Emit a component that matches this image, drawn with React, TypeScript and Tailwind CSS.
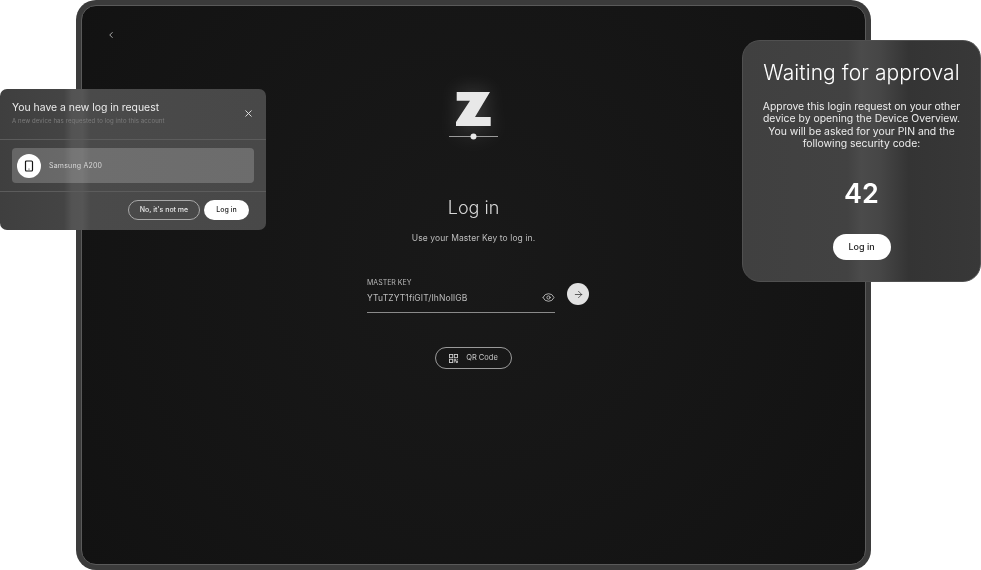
import { ArrowRight, ChevronLeft, Eye, Smartphone, X } from 'lucide-react';

const QrIcon = () => (
  <svg width="9" height="9" viewBox="0 0 10 10" fill="none" stroke="#cfcfcf" strokeWidth="1">
    <rect x="0.5" y="0.5" width="3.6" height="3.6" />
    <rect x="5.9" y="0.5" width="3.6" height="3.6" />
    <rect x="0.5" y="5.9" width="3.6" height="3.6" />
    <path d="M5.9 5.9h1.6v1.6H5.9zM8 8h1.500v1.500H8zM5.900 9.500V8M9.500 5.900v1" />
  </svg>
);

const LoginRequestCard = () => (
  <div className="absolute left-0 top-[89px] z-10 h-[141px] w-[266px] overflow-hidden rounded-[7px] bg-[linear-gradient(90deg,#3f3f3f_0%,#444444_24%,#535353_27%,#555555_31%,#4a4a4a_34%,#484848_100%)] [will-change:opacity]">
    <div className="flex h-[51px] items-start justify-between border-b border-[#5c5c5c] pl-3 pr-3 pt-[12px]">
      <div>
        <h2 className="text-[10.4px] leading-[14px] text-[#ececec]">You have a new log in request</h2>
        <p className="mt-[1px] text-[6px] leading-[9px] tracking-[0.12px] text-[#7c7c7c]">
          A new device has requested to log into this account
        </p>
      </div>
      <X className="mt-[7px] h-[11px] w-[11px] text-[#e8e8e8]" strokeWidth={2} />
    </div>
    <div className="flex h-[52px] items-center border-b border-[#5c5c5c] px-3">
      <div className="flex h-[35px] w-full items-center gap-2 rounded-[4px] bg-white/20 pl-[5px]">
        <div className="flex h-6 w-6 items-center justify-center rounded-full bg-white">
          <Smartphone className="h-3 w-3 text-[#151515]" strokeWidth={2.4} />
        </div>
        <span className="pt-[1px] text-[7px] tracking-[0.2px] text-[#d8d8d8]">Samsung A200</span>
      </div>
    </div>
    <div className="flex justify-end gap-1 pr-[17px] pt-[8px]">
      <button className="h-5 w-[72px] rounded-full border border-[#a8a8a8] text-[7px] font-medium text-[#e6e6e6]">
        No, it's not me
      </button>
      <button className="h-5 w-[45px] rounded-full bg-white text-[7px] font-medium text-[#222222]">Log in</button>
    </div>
  </div>
);

const ApprovalCard = () => (
  <div className="absolute left-[742px] top-[40px] z-10 flex h-[242px] w-[239px] flex-col items-center rounded-[18px] border border-[#505050] bg-[linear-gradient(90deg,#404040_0%,#424242_44%,#4b4b4b_50%,#464646_58%,#343434_70%,#383838_100%)] pt-[19px] text-center [will-change:opacity]">
    <h2 className="text-[21px] font-light leading-[26px] tracking-[0.1px] text-white">Waiting for approval</h2>
    <p className="mt-[15px] text-[10.4px] leading-[12.3px] text-[#ececec]">
      Approve this login request on your other
      <br />
      device by opening the Device Overview.
      <br />
      You will be asked for your PIN and the
      <br />
      following security code:
    </p>
    <div className="mt-[28px] text-[27px] font-semibold leading-[32px] text-white">42</div>
    <button className="mt-[24px] h-[26px] w-[58px] rounded-full bg-white text-[9px] font-medium text-[#222222]">
      Log in
    </button>
  </div>
);

const Logo = () => (
  <svg width="50" height="48" viewBox="0 0 50 48" className="drop-shadow-[0_0_10px_rgba(255,255,255,0.2)]">
    <path d="M7.700 0H41L26 25h15.700v9H7v-4l14-21.300H7.700z" fill="#e8e8e8" />
    <path d="M0 44.500h49" stroke="#9a9a9a" strokeWidth="1.200" />
    <circle cx="24.500" cy="44.500" r="3" fill="#e8e8e8" />
  </svg>
);

export default function App() {
  return (
    <div className="relative h-[570px] w-[981px] overflow-hidden bg-white font-['Inter',sans-serif]">
      <div className="ml-[76px] h-[570px] w-[795px] rounded-[20px] bg-[#3b3b3b] p-[5px]">
        <div className="h-full rounded-[15px] border border-[#5a5a5a] bg-[radial-gradient(circle_at_50%_45%,#191919_0%,#151515_60%,#121212_100%)] pt-[24px] [will-change:opacity]">
          <div className="pl-[24px]">
            <ChevronLeft className="h-[10px] w-[10px] text-[#c8c8c8]" strokeWidth={2} />
          </div>
          <div className="mt-[52px] flex flex-col items-center">
            <Logo />
            <h1 className="mt-[57px] text-[18px] font-light leading-[22px] text-[#d8d8d8]">Log in</h1>
            <p className="mt-[13px] text-[8.5px] leading-[12px] tracking-[0.1px] text-[#bdbdbd]">
              Use your Master Key to log in.
            </p>
            <div className="ml-[9px] mt-[34px] flex items-center gap-[12px]">
              <div className="w-[188px] border-b-[1.5px] border-[#8a8a8a] pb-[8px]">
                <div className="text-[7px] leading-[9px] text-[#b8b8b8]">MASTER KEY</div>
                <div className="mt-[4px] flex items-center justify-between">
                  <span className="text-[8.5px] leading-[12px] tracking-[0.1px] text-[#bdbdbd]">YTuTZYT1fiGIT/IhNoIlGB</span>
                  <Eye className="h-[13px] w-[13px] text-[#cfcfcf]" strokeWidth={1.5} />
                </div>
              </div>
              <div className="mb-[3px] flex h-[22px] w-[22px] items-center justify-center rounded-full bg-[#e2e2e2]">
                <ArrowRight className="h-[11px] w-[11px] text-[#222222]" strokeWidth={1.5} />
              </div>
            </div>
            <button className="mt-[34px] flex h-[22px] w-[77px] items-center justify-center gap-[8px] rounded-full border border-[#9a9a9a] text-[7.5px] text-[#c8c8c8]">
              <QrIcon />
              QR Code
            </button>
          </div>
        </div>
      </div>
      <LoginRequestCard />
      <ApprovalCard />
    </div>
  );
}
